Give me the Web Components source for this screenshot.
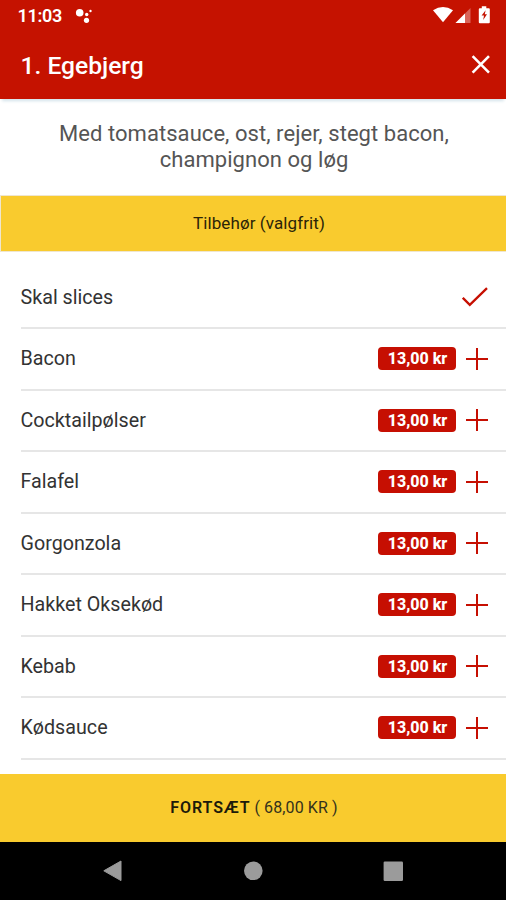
<!DOCTYPE html>
<html lang="da">
<head>
<meta charset="utf-8">
<title>1. Egebjerg</title>
<style>
html,body{margin:0;background:#fff}
body{font-family:Roboto,"Liberation Sans",sans-serif;width:506px;height:900px;overflow:hidden}
</style>
</head>
<body>
<order-screen></order-screen>
<script>
const define=(name,html,init)=>customElements.define(name,class extends HTMLElement{
  connectedCallback(){
    if(this.shadowRoot)return;
    const t=document.createElement('template');
    t.innerHTML=html;
    this.attachShadow({mode:'open'}).append(t.content.cloneNode(true));
    if(init)init(this.shadowRoot,this);
  }
});

define('status-bar',`<style>
:host{display:flex;height:32px;box-sizing:border-box;padding:0 15px 0 17.5px;align-items:center;background:#c51200;color:#fff}
.time{font-size:18px;line-height:32px;font-weight:600;letter-spacing:-.3px}
svg{display:block}
.note{margin-left:13px}
.sys{margin-left:auto}
</style>
<span class="time"><slot></slot></span>
<svg class="note" width="18" height="32" viewBox="75 0 18 32" fill="#fff"><circle cx="79.7" cy="12.8" r="3.8"/><circle cx="86.7" cy="14.5" r="1.7"/><circle cx="90.5" cy="11" r="1.2"/><circle cx="86.5" cy="20.3" r="2.6"/></svg>
<svg class="sys" width="60" height="32" viewBox="431 0 60 32"><path d="M433 10.2Q443 3.6 453 10.2L443 22.3Z" fill="#fff"/><path d="M455.5 23L470.5 8V23Z" fill="#fff" opacity=".35"/><path d="M455.5 23L465 13.5V23Z" fill="#fff"/><path d="M479.3 8.2H481.8V6.3H486.3V8.2H488.8Q489.8 8.2 489.8 9.2V22.3Q489.8 23.3 488.8 23.3H479.8Q478.8 23.3 478.8 22.3V9.2Q478.8 8.2 479.8 8.2Z" fill="#fff"/><path d="M485.6 10.2L481.6 15.4H484L483.2 20L487 14.2H484.8Z" fill="#c51200"/></svg>`);

define('title-bar',`<style>
:host{display:flex;height:66.5px;box-sizing:border-box;padding:0 15.5px 0 20.5px;align-items:center;justify-content:space-between;background:#c51200;color:#fff;box-shadow:0 4px 3px -2px #d3e3ea}
h1{margin:0;padding-top:2px;font-size:24.6px;line-height:30px;font-weight:500}
svg{display:block}
</style>
<h1><slot></slot></h1>
<svg width="20" height="20" viewBox="0 0 20 20"><path d="M1.6 1.2L18 17.6M18 1.2L1.6 17.6" stroke="#fff" stroke-width="2.6"/></svg>`);

define('dish-description',`<style>
:host{display:flex;height:97px;box-sizing:border-box;padding:22.5px 50px 0 52px;justify-content:center;text-align:center;color:#555;font-size:22px;line-height:26px;letter-spacing:.05px}
</style><span><slot></slot></span>`);

define('section-banner',`<style>
:host{display:flex;height:55px;margin-left:1px;align-items:center;justify-content:center;background:#f9cb2e;color:#2b2408;font-size:17px;letter-spacing:.1px;box-shadow:0 0 0 1px #efe6cf}
span{padding:0 0 1px 11px}
</style><span><slot></slot></span>`);

define('topping-row',`<style>
:host{display:flex;height:61.5px;box-sizing:border-box;align-items:center;gap:10px;padding-right:18px;border-bottom:2px solid #e6e6e6;color:#333;font-size:19.7px}
.name{flex:1;line-height:24px;padding-top:1px}
.price{box-sizing:border-box;width:78px;height:23px;border-radius:4px;background:#c60f02;color:#fff;font-size:16px;line-height:23px;font-weight:800;text-align:center;padding-left:1px}
svg{display:block}
</style>
<span class="name"><slot></slot></span>`,(root,el)=>{
  const price=el.getAttribute('price');
  const t=document.createElement('template');
  t.innerHTML=price
    ?`<span class="price">${price}</span><svg width="22" height="22" viewBox="0 0 22 22"><path d="M0 11H22M11 0V22" stroke="#c60f02" stroke-width="2"/></svg>`
    :`<svg width="26" height="20" viewBox="0 0 26 20"><path d="M.8 10.8L7.8 17.8L25 1.2" fill="none" stroke="#c60f02" stroke-width="2.3"/></svg>`;
  root.append(t.content);
});

define('topping-list',`<style>
:host{display:block;padding:17px 0 0 20.5px;height:523px;box-sizing:border-box;overflow:hidden}
</style><slot></slot>`);

define('continue-button',`<style>
:host{display:block;height:68.5px}
button{display:flex;width:100%;height:100%;border:0;margin:0;padding:0 0 0 2px;align-items:center;justify-content:center;gap:4px;background:#f9cb2e;color:#1c1a0a;font:16px Roboto,sans-serif}
b{font-weight:600;letter-spacing:.9px}
span{color:#33311c;letter-spacing:.1px}
</style><button><b><slot></slot></b><span><slot name="total"></slot></span></button>`);

define('android-nav',`<style>
:host{display:flex;height:58px;background:#000}
svg{display:block}
</style>
<svg width="506" height="58" viewBox="0 842 506 58" fill="#9b9b9b"><path d="M103.8 870.8L121 861V880.6Z" stroke="#9b9b9b" stroke-linejoin="round"/><circle cx="253.3" cy="870.8" r="9.3"/><rect x="383.6" y="861.6" width="19.4" height="19.4" rx="1.2"/></svg>`);

define('order-screen',`<style>
:host{display:flex;flex-direction:column;width:506px;height:900px;background:#fff}
status-bar,title-bar,dish-description,section-banner,topping-list,continue-button,android-nav{flex:none}
</style>
<status-bar>11:03</status-bar>
<title-bar>1. Egebjerg</title-bar>
<dish-description>Med tomatsauce, ost, rejer, stegt bacon, champignon og løg</dish-description>
<section-banner>Tilbehør (valgfrit)</section-banner>
<topping-list>
<topping-row>Skal slices</topping-row>
<topping-row price="13,00 kr">Bacon</topping-row>
<topping-row price="13,00 kr">Cocktailpølser</topping-row>
<topping-row price="13,00 kr">Falafel</topping-row>
<topping-row price="13,00 kr">Gorgonzola</topping-row>
<topping-row price="13,00 kr">Hakket Oksekød</topping-row>
<topping-row price="13,00 kr">Kebab</topping-row>
<topping-row price="13,00 kr">Kødsauce</topping-row>
</topping-list>
<continue-button>FORTSÆT<span slot="total">( 68,00 KR )</span></continue-button>
<android-nav></android-nav>`);
</script>
</body>
</html>
